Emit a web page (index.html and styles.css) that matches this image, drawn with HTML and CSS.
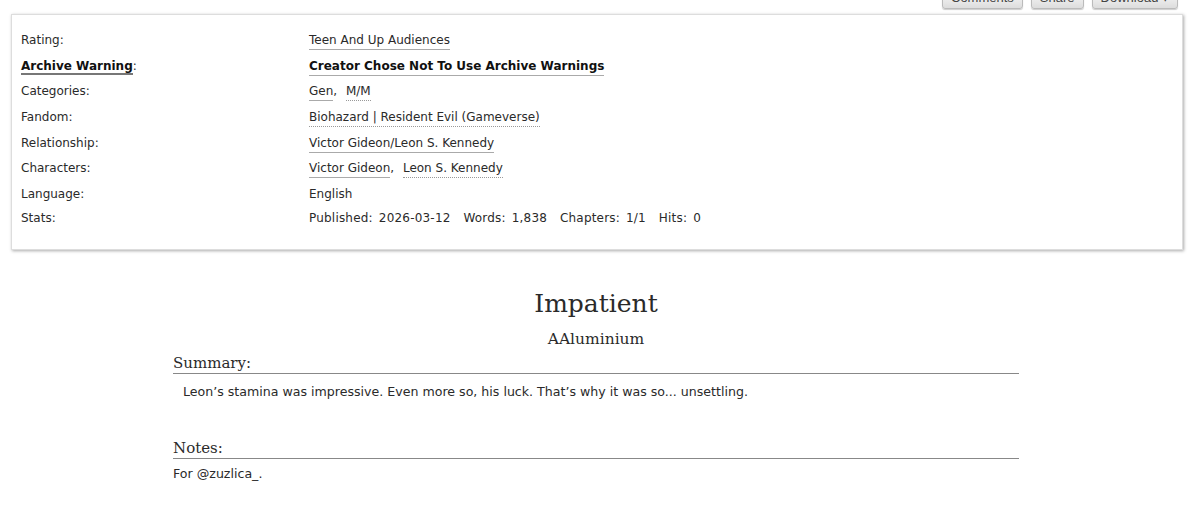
FILE: index.html
```html
<!DOCTYPE html>
<html lang="en">
<head>
    <meta charset="UTF-8">
    <title>Impatient - AAluminium</title>
    <link rel="stylesheet" href="styles.css">
</head>
<body>
<div class="wrapper">
    <ul class="work-nav">
        <li><a href="#">Comments</a></li>
        <li><a href="#">Share</a></li>
        <li><a href="#">Download &#9662;</a></li>
    </ul>

    <dl class="meta">
        <dt>Rating:</dt>
        <dd class="tags"><a href="#">Teen And Up Audiences</a></dd>
        <dt class="warn"><span>Archive Warning</span>:</dt>
        <dd class="tags warn"><a href="#">Creator Chose Not To Use Archive Warnings</a></dd>
        <dt>Categories:</dt>
        <dd class="tags"><a href="#">Gen</a>, <a href="#" class="dot">M/M</a></dd>
        <dt>Fandom:</dt>
        <dd class="tags"><a href="#" class="dot">Biohazard | Resident Evil (Gameverse)</a></dd>
        <dt>Relationship:</dt>
        <dd class="tags"><a href="#">Victor Gideon/Leon S. Kennedy</a></dd>
        <dt>Characters:</dt>
        <dd class="tags"><a href="#">Victor Gideon</a>, <a href="#" class="dot">Leon S. Kennedy</a></dd>
        <dt class="plain">Language:</dt>
        <dd class="plain">English</dd>
        <dt class="plain">Stats:</dt>
        <dd class="plain stats">
            <span><b>Published:</b>2026-03-12</span>
            <span><b>Words:</b>1,838</span>
            <span><b>Chapters:</b>1/1</span>
            <span><b>Hits:</b>0</span>
        </dd>
    </dl>

    <div class="preface">
        <h2 class="title">Impatient</h2>
        <h3 class="byline">AAluminium</h3>

        <h3 class="heading">Summary:</h3>
        <blockquote class="summary">Leon’s stamina was impressive. Even more so, his luck. That’s why it was so... unsettling.</blockquote>

        <h3 class="heading notes-head">Notes:</h3>
        <p class="notes">For <a href="#">@zuzlica_</a>.</p>
    </div>
</div>
</body>
</html>
```

FILE: styles.css
```css
*{
    box-sizing: border-box;
}
body{
    margin: 0;
    font-family: "DejaVu Sans", sans-serif;
    font-size: 12px;
    color: #2a2a2a;
    background: #fff;
}
a{
    color: #2a2a2a;
    text-decoration: none;
}
.wrapper{
    padding: 0 17px 0 11px;
}

/* 顶部按钮 */
.work-nav{
    list-style: none;
    margin: -13px 5px 0 0;
    padding: 0;
    display: flex;
    justify-content: flex-end;
    gap: 8px;
}
.work-nav a{
    display: block;
    height: 22px;
    line-height: 20px;
    padding: 0 8px;
    font-family: "Liberation Sans", sans-serif;
    font-size: 13px;
    color: #444;
    border: 1px solid #bbb;
    border-radius: 3px;
    background: linear-gradient(#fff, #ddd);
    box-shadow: 0 1px 1px #ccc;
}

/* 作品信息框 */
.meta{
    margin: 5px 0 0;
    padding: 17px 10px 16px 9px;
    border: 1px solid #ddd;
    box-shadow: 1px 1px 3px #aaa;
    display: grid;
    grid-template-columns: 288px 1fr;
}
.meta dt,
.meta dd{
    margin: 0;
    line-height: 17px;
    height: 25.7px;
}
.meta dt.plain,
.meta dd.plain{
    height: 23.5px;
}
.meta dt.warn span{
    font-weight: bold;
    color: #111;
    border-bottom: 2px solid #777;
}
.meta dd.tags a{
    border-bottom: 1px solid #aaa;
    padding-bottom: 2px;
}
.meta dd.tags a.dot{
    border-bottom: 1px dotted #999;
}
.meta dd.tags a + a{
    margin-left: 5px;
}
.meta dd.warn a{
    font-weight: bold;
    color: #111;
}
.stats span{
    margin-right: 9px;
    letter-spacing: 0.2px;
}
.stats b{
    font-weight: normal;
    margin-right: 6px;
}

/* 标题与简介 */
.preface{
    width: 846px;
    margin: 0 auto;
    padding-top: 38px;
    position: relative;
    left: -1px;
}
.title{
    margin: 0;
    text-align: center;
    font-family: "DejaVu Serif", serif;
    font-weight: normal;
    font-size: 25px;
    line-height: 32px;
    color: #2a2a2a;
}
.byline{
    margin: 9px 0 0;
    text-align: center;
    font-family: "DejaVu Serif", serif;
    font-weight: normal;
    font-size: 15.5px;
    line-height: 20px;
}
.heading{
    margin: 5px 0 0;
    font-family: "DejaVu Serif", serif;
    font-weight: normal;
    font-size: 15px;
    line-height: 19px;
    border-bottom: 1px solid #888;
}
.summary{
    margin: 9px 0 0 10px;
    font-size: 12.6px;
    line-height: 18px;
}
.notes-head{
    margin-top: 38px;
}
.notes{
    margin: 6px 0 0;
    font-size: 12.6px;
    line-height: 18px;
}
.notes a{
    border-bottom: 1px solid #555;
    padding-bottom: 2px;
}
```
